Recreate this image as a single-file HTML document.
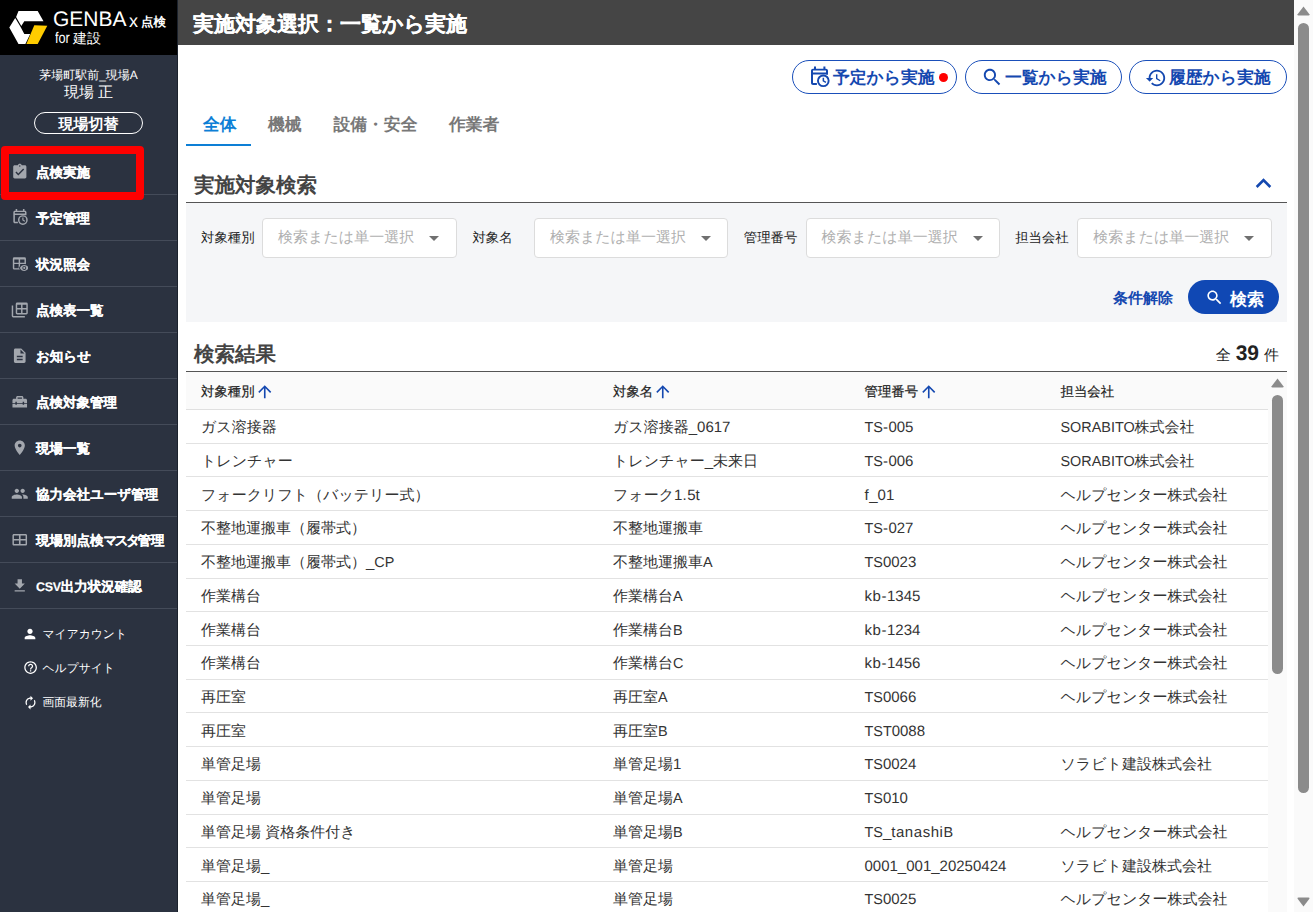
<!DOCTYPE html>
<html lang="ja">
<head>
<meta charset="utf-8">
<title>実施対象選択：一覧から実施</title>
<style>
*{box-sizing:border-box;margin:0;padding:0}
html,body{width:1313px;height:912px;overflow:hidden;background:#fff}
body{font-family:"Liberation Sans",sans-serif;color:#222;position:relative;font-size:15px;text-rendering:geometricPrecision}
i{font-style:normal}
u{text-decoration:none}
svg{display:block}
/* ---- sidebar ---- */
#side{position:absolute;left:0;top:0;width:178px;height:912px;background:#2b3240;color:#fff;border-right:1px solid #1b222d}
#logo{position:absolute;left:0;top:0;width:177px;height:55px;background:#000}
#logo .mark{position:absolute;left:0;top:0}
#logo div{position:absolute;white-space:nowrap;color:#fff}
.lg1{left:53px;top:8px;font-size:21px;line-height:24px}
.lg2{left:129px;top:11px;font-size:18px;line-height:20px}
.lg3{left:141px;top:13px;font-size:12.5px;line-height:18px;font-weight:bold}
.lg4{left:54.5px;top:31px;font-size:15.5px;line-height:16px;color:#ccc;transform:scaleX(.82);transform-origin:0 0}
.lg5{left:73px;top:30px;font-size:14px;line-height:16px;color:#ddd}
.site{position:absolute;left:0;width:177px;text-align:center;white-space:nowrap}
.s1{top:67px;font-size:12px;line-height:16px}
.s2{top:83px;font-size:15px;line-height:20px}
#swbtn{position:absolute;left:34px;top:112px;width:109px;height:22px;border:1px solid #fff;border-radius:11px;text-align:center;font-weight:bold;font-size:15px;line-height:23px}
.mi{position:absolute;left:0;width:177px;height:46px;border-bottom:1px solid #444b59}
.mi .ic{position:absolute;left:10.9px;top:13.8px;width:17.5px;height:17.5px;fill:#a3a7ae}
.mi .tx{position:absolute;left:36px;top:0;line-height:48px;font-size:13.5px;font-weight:bold;white-space:nowrap;-webkit-text-stroke:.15px #fff}
.si{position:absolute;left:0;width:177px;height:34px}
.si .ic{position:absolute;left:22.4px;top:8.2px;width:16px;height:16px;fill:#fff}
.si2 .ic{left:22.9px;top:9.1px;width:15px;height:15px}
.si .tx{position:absolute;left:42.5px;top:-.7px;line-height:34px;font-size:11.8px;white-space:nowrap}
#red{position:absolute;left:1px;top:146px;width:143px;height:54px;border:8px solid #fe0000;border-radius:4px}
/* ---- main ---- */
#hdr{position:absolute;left:178px;top:0;width:1116px;height:45px;background:#454545;color:#fff}
#hdr .t{position:absolute;left:15px;top:.5px;line-height:47px;font-size:21px;font-weight:bold;white-space:nowrap;-webkit-text-stroke:.2px #fff}
.pill{position:absolute;top:60px;height:34px;border:1px solid #1a4fba;border-radius:17px;background:#fff;color:#1448b0;font-weight:bold;font-size:16.8px;white-space:nowrap}
.pill .tx{position:absolute;top:0;line-height:33px}
.pill svg{position:absolute;fill:#1448b0}
.pill .dot{position:absolute;left:146px;top:11.5px;width:9px;height:9px;border-radius:4.5px;background:#f00}
.tab{position:absolute;top:112px;height:26px;line-height:26px;font-size:16.8px;font-weight:bold;color:#787878;white-space:nowrap}
.tab.on{color:#0d7fd6}
#tabline{position:absolute;left:186px;top:144px;width:65px;height:2px;background:#0d7fd6}
.h2{position:absolute;left:194px;font-size:20.5px;font-weight:bold;color:#444;white-space:nowrap;line-height:30px;margin-top:1.5px}
.chev{position:absolute;left:1248px;top:168px;width:31px;height:31px;fill:#1448b0}
.hr{position:absolute;left:186px;width:1101px;height:1px;background:#555}
#panel{position:absolute;left:186px;top:203px;width:1101px;height:119px;background:#f5f6f8}
.lb{position:absolute;top:228px;line-height:20px;font-size:13.4px;color:#222;white-space:nowrap}
.sel{position:absolute;top:218px;width:194.5px;height:40px;border:1px solid #dcdcdc;border-radius:4px;background:#fff}
.sel .ph{position:absolute;left:15px;top:0;line-height:38px;font-size:15px;color:#b0b0b0;white-space:nowrap}
.sel svg{position:absolute;left:159px;top:7px;width:24px;height:24px;fill:#707070}
#clear{position:absolute;left:1113px;top:289px;line-height:20px;font-size:15px;font-weight:bold;color:#1448b0;white-space:nowrap}
#sbtn{position:absolute;left:1188px;top:280px;width:91px;height:34px;border-radius:17px;background:#1048b4;color:#fff}
#sbtn svg{position:absolute;left:16.5px;top:8.3px;width:19px;height:19px;fill:#fff}
#sbtn .tx{position:absolute;left:42px;top:1.5px;line-height:35px;font-size:17px;font-weight:bold;white-space:nowrap}
#cnt{position:absolute;right:34px;top:339.3px;line-height:30px;white-space:nowrap;color:#222}
#cnt .a{font-size:15px}
#cnt .n{font-size:21px;font-weight:bold;margin:0 5px}
/* ---- table ---- */
#tbl{position:absolute;left:186px;top:372px;width:1082px;height:540px;overflow:hidden}
.th{position:absolute;left:0;top:0;width:1082px;height:38px;background:#fafafa;border-bottom:1px solid #e0e0e0;font-size:13.4px;color:#222}
.th span{position:absolute;top:0;line-height:39px;white-space:nowrap;-webkit-text-stroke:.2px #222}
.th svg{position:absolute;top:10.2px;width:19.5px;height:19.5px;fill:#1448b0}
.tr{position:absolute;left:0;width:1082px;height:33.714px;border-bottom:1px solid #e2e2e2;font-size:15px;color:#333}
.tr span{position:absolute;top:1.3px;line-height:34px;white-space:nowrap}
.tr i{font-size:14.4px}
.tr u{letter-spacing:.55px}
.c1{left:15px}.c2{left:427px}.c3{left:678.5px}.c4{left:874.5px}
/* ---- scrollbars ---- */
.trk{position:absolute;background:#fafafa}
.thm{position:absolute;background:#8b8b8b;border-radius:5.5px;width:11px}
.arr{position:absolute;width:13px;height:10px;fill:#8b8b8b}
.mi .tx i{font-size:12.5px;letter-spacing:-.3px}
.mi .tx b{letter-spacing:-2.5px;font-weight:bold}
.mi .ic .halo{fill:#2b3240;stroke:#2b3240;stroke-width:2.4}
.m1 .ic{left:11px;top:12.4px;width:18.6px;height:18.6px}
.m0 .ic{left:10.9px;top:14.2px;width:17.6px;height:17.6px}
.si1 .ic{left:23px;top:8.7px;width:15.2px;height:15.2px}
</style>
</head>
<body>
<div id="side">
<div id="logo">
<svg class="mark" viewBox="0 0 56 55" width="56" height="55"><polygon fill="#fff" points="18.5,11 37.7,11 43.5,21.2 24.3,21.2 21.3,26 16.1,17"/><polygon fill="#fff" points="15.2,18 9.3,27.4 18.5,43.9 25.4,43.9 30.2,33.9 24.3,33.9 20.5,26.8"/><polygon fill="#ffcc00" points="34.3,25.2 47.3,25.7 37.7,43.9 26.4,43.9"/></svg>
<div class="lg1">GENBA</div><div class="lg2">x</div><div class="lg3">点検</div><div class="lg4">for</div><div class="lg5">建設</div>
</div>
<div class="site s1">茅場町駅前<i>_</i>現場<i>A</i></div>
<div class="site s2">現場 正</div>
<div id="swbtn">現場切替</div>
<div class="mi m0" style="top:149px"><svg class="ic" viewBox="0 0 24 24"><path d="M19 3h-4.18C14.4 1.84 13.3 1 12 1c-1.3 0-2.4.84-2.82 2H5c-1.1 0-2 .9-2 2v14c0 1.1.9 2 2 2h14c1.1 0 2-.9 2-2V5c0-1.1-.9-2-2-2zm-7 0c.55 0 1 .45 1 1s-.45 1-1 1-1-.45-1-1 .45-1 1-1zm-2 14l-4-4 1.41-1.41L10 14.17l6.59-6.59L18 9l-8 8z"/></svg><div class="tx">点検実施</div></div>
<div class="mi m1" style="top:195px"><svg class="ic" viewBox="0 0 24 24"><path fill-rule="evenodd" d="M6 2.500h2v2.200h7.400V2.500h2v2.200h.600c1.100 0 2 .900 2 2v4.100h-2V10.400H5v8.700h3.900v2H5c-1.100 0-2-.900-2-2V6.700c0-1.100.900-2 2-2h1V2.500zM5 6.600v1.900h13V6.600H5z"/><path fill-rule="evenodd" d="M15.300 10.500a6.300 6.300 0 1 0 0 12.600 6.300 6.300 0 0 0 0-12.600zm0 10.700a4.400 4.400 0 1 1 0-8.800 4.400 4.400 0 0 1 0 8.800z"/><path d="M14.600 13.700h1.500v2.800l2.200 1.350-.750 1.200-2.950-1.800z"/></svg><div class="tx">予定管理</div></div>
<div class="mi m2" style="top:241px"><svg class="ic" viewBox="0 0 24 24"><path fill-rule="evenodd" d="M4.5 3h14a2 2 0 0 1 2 2v13a2 2 0 0 1-2 2h-14a2 2 0 0 1-2-2V5a2 2 0 0 1 2-2zm0 3.2v4.3h6V6.2h-6zm8 0v4.3h6V6.2h-6zm-8 6.3V18h6v-5.5h-6zm8 0V18h6v-5.5h-6z"/><path class="halo" d="M18.2 13.6c-2.7 0-5 1.65-5.95 4.1.95 2.45 3.25 4.1 5.95 4.1s5-1.65 5.95-4.1c-.95-2.45-3.25-4.1-5.95-4.1z"/><path fill-rule="evenodd" d="M18.2 13.6c-2.7 0-5 1.65-5.95 4.1.95 2.45 3.25 4.1 5.95 4.1s5-1.65 5.95-4.1c-.95-2.45-3.25-4.1-5.95-4.1zm0 6.8a2.7 2.7 0 1 1 0-5.4 2.7 2.7 0 0 1 0 5.4zm0-4.2a1.5 1.5 0 1 0 0 3 1.5 1.5 0 0 0 0-3z"/></svg><div class="tx">状況照会</div></div>
<div class="mi m3" style="top:287px"><svg class="ic" viewBox="0 0 24 24"><path d="M1 6h2v14.5h16v2H3a2 2 0 0 1-2-2V6z"/><path fill-rule="evenodd" d="M8.5 2H21a2 2 0 0 1 2 2v12.5a2 2 0 0 1-2 2H8.500a2 2 0 0 1-2-2V4a2 2 0 0 1 2-2zm0 3.200v4.400h5.300V5.200H8.500zm7.300 0v4.400H21V5.200h-5.200zm-7.300 6.400v4.900h5.300v-4.900H8.500zm7.300 0v4.900H21v-4.900h-5.200z"/></svg><div class="tx">点検表一覧</div></div>
<div class="mi m4" style="top:333px"><svg class="ic" viewBox="0 0 24 24"><path d="M14 2H6c-1.1 0-1.99.9-1.99 2L4 20c0 1.1.89 2 1.99 2H18c1.1 0 2-.9 2-2V8l-6-6zm2 16H8v-2h8v2zm0-4H8v-2h8v2zm-3-5V3.5L18.5 9H13z"/></svg><div class="tx">お知らせ</div></div>
<div class="mi m5" style="top:379px"><svg class="ic" viewBox="0 0 24 24"><path d="M18 16h-2v-1H8v1H6v-1H2v5h20v-5h-4v1zm2-8h-3V6c0-1.1-.9-2-2-2H9c-1.1 0-2 .9-2 2v2H4c-1.1 0-2 .9-2 2v4h4v-2h2v2h8v-2h2v2h4v-4c0-1.1-.9-2-2-2zm-5 0H9V6h6v2z"/></svg><div class="tx">点検対象管理</div></div>
<div class="mi m6" style="top:425px"><svg class="ic" viewBox="0 0 24 24"><path d="M12 2C8.13 2 5 5.13 5 9c0 5.25 7 13 7 13s7-7.75 7-13c0-3.87-3.13-7-7-7zm0 9.5c-1.38 0-2.5-1.12-2.5-2.5s1.12-2.5 2.5-2.5 2.5 1.12 2.5 2.5-1.12 2.5-2.5 2.5z"/></svg><div class="tx">現場一覧</div></div>
<div class="mi m7" style="top:471px"><svg class="ic" viewBox="0 0 24 24"><path d="M16 11c1.66 0 2.99-1.34 2.99-3S17.66 5 16 5c-1.66 0-3 1.34-3 3s1.34 3 3 3zm-8 0c1.66 0 2.99-1.34 2.99-3S9.66 5 8 5C6.34 5 5 6.34 5 8s1.34 3 3 3zm0 2c-2.33 0-7 1.17-7 3.5V19h14v-2.5c0-2.33-4.67-3.5-7-3.5zm8 0c-.29 0-.62.02-.97.05 1.16.84 1.97 1.97 1.97 3.45V19h6v-2.5c0-2.33-4.67-3.5-7-3.5z"/></svg><div class="tx">協力会社ユーザ管理</div></div>
<div class="mi m8" style="top:517px"><svg class="ic" viewBox="0 0 24 24"><path d="M20 4H4c-1.1 0-2 .9-2 2v12c0 1.1.9 2 2 2h16c1.1 0 2-.9 2-2V6c0-1.1-.9-2-2-2zM4 6.2h6.9v4.7H4V6.2zm9.1 0H20v4.7h-6.9V6.2zM4 13.1h6.9v4.7H4v-4.7zm9.1 4.7v-4.7H20v4.7h-6.9z"/></svg><div class="tx">現場別点検<b>マスタ</b>管理</div></div>
<div class="mi m9" style="top:563px"><svg class="ic" viewBox="0 0 24 24"><path d="M5 20h14v-2H5v2zM19 9h-4V3H9v6H5l7 7 7-7z"/></svg><div class="tx"><i>CSV</i>出力状況確認</div></div>
<div class="si si0" style="top:617.5px"><svg class="ic" viewBox="0 0 24 24"><path d="M12 12c2.21 0 4-1.79 4-4s-1.79-4-4-4-4 1.79-4 4 1.79 4 4 4zm0 2c-2.67 0-8 1.34-8 4v2h16v-2c0-2.66-5.33-4-8-4z"/></svg><div class="tx">マイアカウント</div></div>
<div class="si si1" style="top:651.5px"><svg class="ic" viewBox="0 0 24 24"><path d="M11 18h2v-2h-2v2zm1-16C6.48 2 2 6.48 2 12s4.48 10 10 10 10-4.48 10-10S17.52 2 12 2zm0 18c-4.41 0-8-3.59-8-8s3.59-8 8-8 8 3.59 8 8-3.59 8-8 8zm0-14c-2.21 0-4 1.79-4 4h2c0-1.1.9-2 2-2s2 .9 2 2c0 2-3 1.75-3 5h2c0-2.25 3-2.5 3-5 0-2.21-1.79-4-4-4z"/></svg><div class="tx">ヘルプサイト</div></div>
<div class="si si2" style="top:685.5px"><svg class="ic" viewBox="0 0 24 24"><path d="M12 6v3l4-4-4-4v3c-4.42 0-8 3.58-8 8 0 1.57.46 3.03 1.24 4.26L6.7 14.8c-.45-.83-.7-1.79-.7-2.8 0-3.31 2.69-6 6-6zm6.76 1.74L17.3 9.2c.44.84.7 1.79.7 2.8 0 3.31-2.69 6-6 6v-3l-4 4 4 4v-3c4.42 0 8-3.58 8-8 0-1.57-.46-3.03-1.24-4.26z"/></svg><div class="tx">画面最新化</div></div>
<div id="red"></div>
</div>
<div id="hdr"><div class="t">実施対象選択：一覧から実施</div></div>
<div class="pill" style="left:792px;width:165px"><svg style="left:14.9px;top:3.4px;width:24px;height:24px" viewBox="0 0 24 24"><path fill-rule="evenodd" d="M6 2.500h2v2.200h7.400V2.500h2v2.200h.600c1.100 0 2 .900 2 2v4.100h-2V10.400H5v8.700h3.900v2H5c-1.100 0-2-.900-2-2V6.700c0-1.100.900-2 2-2h1V2.500zM5 6.600v1.900h13V6.600H5z"/><path fill-rule="evenodd" d="M15.300 10.500a6.300 6.300 0 1 0 0 12.600 6.300 6.300 0 0 0 0-12.600zm0 10.700a4.400 4.400 0 1 1 0-8.800 4.400 4.400 0 0 1 0 8.800z"/><path d="M14.600 13.700h1.500v2.800l2.200 1.350-.750 1.200-2.950-1.800z"/></svg><div class="tx" style="left:40px">予定から実施</div><div class="dot"></div></div>
<div class="pill" style="left:965px;width:157px"><svg style="left:15.3px;top:5.2px;width:22.5px;height:22.5px" viewBox="0 0 24 24"><path d="M15.5 14h-.79l-.28-.27C15.41 12.59 16 11.11 16 9.5 16 5.91 13.09 3 9.5 3S3 5.91 3 9.5 5.91 16 9.5 16c1.61 0 3.09-.59 4.23-1.57l.27.28v.79l5 4.99L20.49 19l-4.99-5zm-6 0C7.01 14 5 11.99 5 9.5S7.01 5 9.5 5 14 7.01 14 9.5 11.99 14 9.5 14z"/></svg><div class="tx" style="left:39px">一覧から実施</div></div>
<div class="pill" style="left:1129px;width:158px"><svg style="left:15.2px;top:5.5px;width:22px;height:22px" viewBox="0 0 24 24"><path d="M13 3c-4.97 0-9 4.03-9 9H1l3.89 3.89.07.14L9 12H6c0-3.87 3.13-7 7-7s7 3.13 7 7-3.13 7-7 7c-1.93 0-3.68-.79-4.94-2.06l-1.42 1.42C8.27 19.99 10.51 21 13 21c4.97 0 9-4.03 9-9s-4.03-9-9-9zm-1 5v5l4.28 2.54.72-1.21-3.5-2.08V8H12z"/></svg><div class="tx" style="left:39px">履歴から実施</div></div>
<div class="tab on" style="left:203px">全体</div><div class="tab" style="left:268px">機械</div><div class="tab" style="left:333.5px">設備・安全</div><div class="tab" style="left:449px">作業者</div>
<div id="tabline"></div>
<div class="h2" style="top:169px">実施対象検索</div>
<svg class="chev" viewBox="0 0 24 24"><path d="M12 8l-6 6 1.41 1.41L12 10.83l4.59 4.58L18 14z"/></svg>
<div class="hr" style="top:202px"></div>
<div id="panel"></div>
<div class="lb" style="left:201.0px">対象種別</div>
<div class="sel" style="left:262.1px"><div class="ph">検索または単一選択</div><svg viewBox="0 0 24 24"><path d="M7 10l5 5 5-5z"/></svg></div>
<div class="lb" style="left:472.4px">対象名</div>
<div class="sel" style="left:533.9px"><div class="ph">検索または単一選択</div><svg viewBox="0 0 24 24"><path d="M7 10l5 5 5-5z"/></svg></div>
<div class="lb" style="left:743.8px">管理番号</div>
<div class="sel" style="left:805.6px"><div class="ph">検索または単一選択</div><svg viewBox="0 0 24 24"><path d="M7 10l5 5 5-5z"/></svg></div>
<div class="lb" style="left:1015.2px">担当会社</div>
<div class="sel" style="left:1077.3px"><div class="ph">検索または単一選択</div><svg viewBox="0 0 24 24"><path d="M7 10l5 5 5-5z"/></svg></div>
<div id="clear">条件解除</div>
<div id="sbtn"><svg viewBox="0 0 24 24"><path d="M15.5 14h-.79l-.28-.27C15.41 12.59 16 11.11 16 9.5 16 5.91 13.09 3 9.5 3S3 5.91 3 9.5 5.91 16 9.5 16c1.61 0 3.09-.59 4.23-1.57l.27.28v.79l5 4.99L20.49 19l-4.99-5zm-6 0C7.01 14 5 11.99 5 9.5S7.01 5 9.5 5 14 7.01 14 9.5 11.99 14 9.5 14z"/></svg><div class="tx">検索</div></div>
<div class="h2" style="top:338px">検索結果</div>
<div id="cnt"><span class="a">全</span><span class="n">39</span><span class="a">件</span></div>
<div class="hr" style="top:371px"></div>
<div id="tbl">
<div class="th"><span class="c1">対象種別</span><svg style="left:68.9px" viewBox="0 0 24 24"><path d="M4 12l1.41 1.41L11 7.83V20h2V7.83l5.58 5.59L20 12l-8-8-8 8z"/></svg><span class="c2">対象名</span><svg style="left:467.3px" viewBox="0 0 24 24"><path d="M4 12l1.41 1.41L11 7.83V20h2V7.83l5.58 5.59L20 12l-8-8-8 8z"/></svg><span class="c3">管理番号</span><svg style="left:732.5px" viewBox="0 0 24 24"><path d="M4 12l1.41 1.41L11 7.83V20h2V7.83l5.58 5.59L20 12l-8-8-8 8z"/></svg><span class="c4">担当会社</span></div>
<div class="tr" style="top:38.00px"><span class="c1">ガス溶接器</span><span class="c2">ガス溶接器_0617</span><span class="c3"><i>TS</i><u>-</u>005</span><span class="c4"><i>SORABITO</i>株式会社</span></div>
<div class="tr" style="top:71.71px"><span class="c1">トレンチャー</span><span class="c2">トレンチャー_未来日</span><span class="c3"><i>TS</i><u>-</u>006</span><span class="c4"><i>SORABITO</i>株式会社</span></div>
<div class="tr" style="top:105.43px"><span class="c1">フォークリフト（バッテリー式）</span><span class="c2">フォーク1<u>.</u>5<u>t</u></span><span class="c3"><u>f</u>_01</span><span class="c4">ヘルプセンター株式会社</span></div>
<div class="tr" style="top:139.14px"><span class="c1">不整地運搬車（履帯式）</span><span class="c2">不整地運搬車</span><span class="c3"><i>TS</i><u>-</u>027</span><span class="c4">ヘルプセンター株式会社</span></div>
<div class="tr" style="top:172.86px"><span class="c1">不整地運搬車（履帯式）_<i>CP</i></span><span class="c2">不整地運搬車<i>A</i></span><span class="c3"><i>TS</i>0023</span><span class="c4">ヘルプセンター株式会社</span></div>
<div class="tr" style="top:206.57px"><span class="c1">作業構台</span><span class="c2">作業構台<i>A</i></span><span class="c3"><u>kb-</u>1345</span><span class="c4">ヘルプセンター株式会社</span></div>
<div class="tr" style="top:240.28px"><span class="c1">作業構台</span><span class="c2">作業構台<i>B</i></span><span class="c3"><u>kb-</u>1234</span><span class="c4">ヘルプセンター株式会社</span></div>
<div class="tr" style="top:274.00px"><span class="c1">作業構台</span><span class="c2">作業構台<i>C</i></span><span class="c3"><u>kb-</u>1456</span><span class="c4">ヘルプセンター株式会社</span></div>
<div class="tr" style="top:307.71px"><span class="c1">再圧室</span><span class="c2">再圧室<i>A</i></span><span class="c3"><i>TS</i>0066</span><span class="c4">ヘルプセンター株式会社</span></div>
<div class="tr" style="top:341.43px"><span class="c1">再圧室</span><span class="c2">再圧室<i>B</i></span><span class="c3"><i>TST</i>0088</span></div>
<div class="tr" style="top:375.14px"><span class="c1">単管足場</span><span class="c2">単管足場1</span><span class="c3"><i>TS</i>0024</span><span class="c4">ソラビト建設株式会社</span></div>
<div class="tr" style="top:408.85px"><span class="c1">単管足場</span><span class="c2">単管足場<i>A</i></span><span class="c3"><i>TS</i>010</span></div>
<div class="tr" style="top:442.57px"><span class="c1">単管足場 資格条件付き</span><span class="c2">単管足場<i>B</i></span><span class="c3"><i>TS</i>_<u>tanashi</u><i>B</i></span><span class="c4">ヘルプセンター株式会社</span></div>
<div class="tr" style="top:476.28px"><span class="c1">単管足場_</span><span class="c2">単管足場</span><span class="c3">0001_001_20250424</span><span class="c4">ソラビト建設株式会社</span></div>
<div class="tr" style="top:510.00px"><span class="c1">単管足場_</span><span class="c2">単管足場</span><span class="c3"><i>TS</i>0025</span><span class="c4">ヘルプセンター株式会社</span></div>
</div>
<div class="trk" style="left:1268px;top:372px;width:19px;height:540px"></div>
<svg class="arr" style="left:1271px;top:378px" viewBox="0 0 13 10"><path d="M6.5 0.6 L12.4 8.2 Q12.8 9.6 11.4 9.6 L1.6 9.6 Q0.2 9.6 0.6 8.2 Z"/></svg>
<div class="thm" style="left:1272px;top:395px;height:279px"></div>
<div class="trk" style="left:1294px;top:0;width:19px;height:912px"></div>
<svg class="arr" style="left:1297px;top:6px" viewBox="0 0 13 10"><path d="M6.5 0.6 L12.4 8.2 Q12.8 9.6 11.4 9.6 L1.6 9.6 Q0.2 9.6 0.6 8.2 Z"/></svg>
<div class="thm" style="left:1298px;top:23px;height:770px"></div>
<svg class="arr" style="left:1297px;top:896.5px" viewBox="0 0 13 10"><path d="M6.5 9.4 L12.4 1.8 Q12.8 0.4 11.4 0.4 L1.6 0.4 Q0.2 0.4 0.6 1.8 Z"/></svg>
</body>
</html>
